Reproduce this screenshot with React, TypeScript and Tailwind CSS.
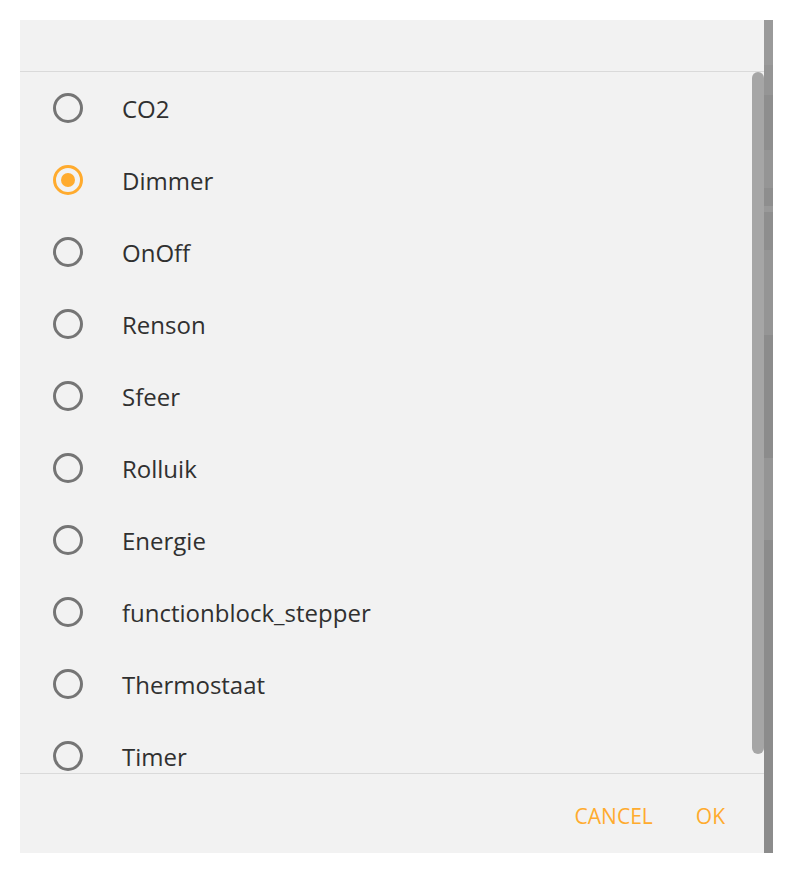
import React from 'react';

const options = [
    'CO2',
    'Dimmer',
    'OnOff',
    'Renson',
    'Sfeer',
    'Rolluik',
    'Energie',
    'functionblock_stepper',
    'Thermostaat',
    'Timer',
];

// grey bands of the page peeking out behind the dialog's right edge
const strip = [
    { h: 45, c: 'bg-[#9a9a9a]' },
    { h: 30, c: 'bg-[#959595]' },
    { h: 55, c: 'bg-[#8e8e8e]' },
    { h: 38, c: 'bg-[#959595]' },
    { h: 18, c: 'bg-[#8e8e8e]' },
    { h: 6, c: 'bg-[#999999]' },
    { h: 38, c: 'bg-[#8e8e8e]' },
    { h: 85, c: 'bg-[#959595]' },
    { h: 123, c: 'bg-[#8c8c8c]' },
    { h: 82, c: 'bg-[#959595]' },
    { h: 313, c: 'bg-[#8c8c8c]' },
];

function Radio({ checked }: { checked: boolean }) {
    return (
        <div
            className={`w-[30px] h-[30px] rounded-full border-[3px] flex items-center justify-center shrink-0 ${checked ? 'border-[#ffab2e]' : 'border-[#757575]'
                }`}
        >
            {checked ? <div className="w-[14px] h-[14px] rounded-full bg-[#ffab2e]"></div> : null}
        </div>
    );
}

export default function App() {
    const selected = 'Dimmer';

    return (
        <div className="w-[793px] h-[873px] bg-white pt-[20px] pl-[20px] flex" style={{ fontFamily: '"Open Sans", "Noto Sans", sans-serif' }}>
            <div className="w-[744px] h-[833px] bg-[#f2f2f2] flex flex-col">
                {/* Header */}
                <div className="h-[52px] border-b border-[#dadada] shrink-0"></div>

                {/* Options list */}
                <div className="relative h-[701px] overflow-hidden shrink-0">
                    {options.map((name) => (
                        <div key={name} className="h-[72px] flex items-center pl-[33px]">
                            <Radio checked={name === selected} />
                            <span className="ml-[39px] text-[24px] text-[#303030] leading-none pt-[2px]">{name}</span>
                        </div>
                    ))}
                    {/* Scrollbar thumb */}
                    <div className="absolute right-0 top-0 w-[12px] h-[682px] rounded-full bg-[#a6a6a6]"></div>
                </div>

                {/* Footer */}
                <div className="flex-1 border-t border-[#dadada] flex items-center justify-end pr-[39px] pt-[6px] gap-[43px] text-[21px] text-[#ffab2e]">
                    <span>CANCEL</span>
                    <span>OK</span>
                </div>
            </div>
            <div className="w-[9px] h-[833px] flex flex-col">
                {strip.map((s, i) => (
                    <div key={i} className={s.c} style={{ height: s.h }}></div>
                ))}
            </div>
        </div>
    );
}
